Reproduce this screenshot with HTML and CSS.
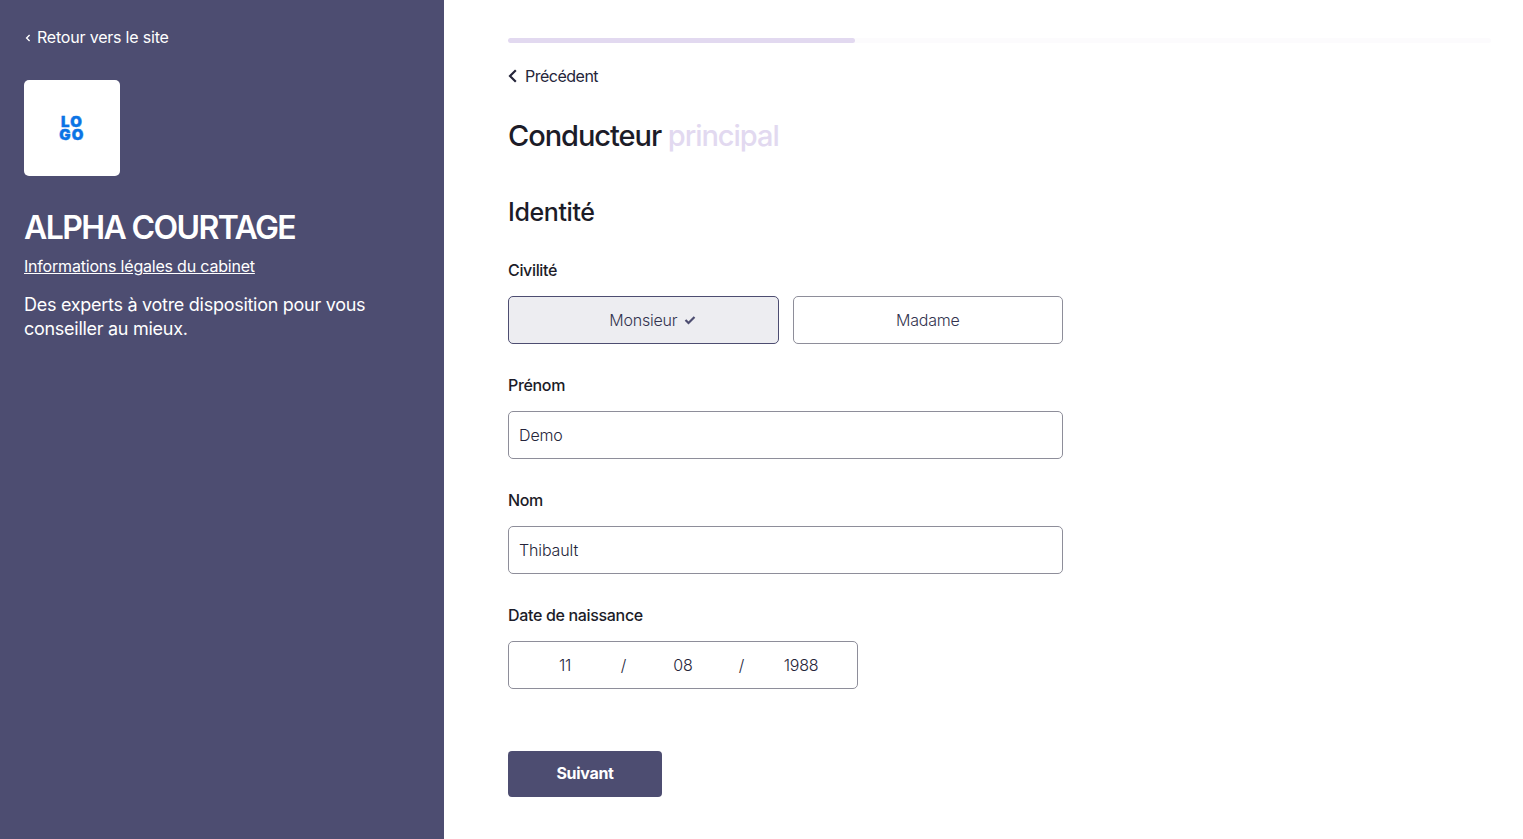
FILE: index.html
```html
<!DOCTYPE html>
<html lang="fr">
<head>
<meta charset="utf-8">
<title>Conducteur principal</title>
<link rel="stylesheet" href="styles.css">
</head>
<body>
<div class="layout">
  <aside class="side">
    <a class="back-site" href="#">
      <svg viewBox="0 0 6 8" width="6" height="8"><path d="M4.6 1 1.6 4l3 3" fill="none" stroke="#fff" stroke-width="1.4"/></svg>
      Retour vers le site
    </a>
    <div class="logo-box">
      <svg class="logo" viewBox="0 0 24 24" width="24" height="24">
        <text x="12" y="11.4" text-anchor="middle">LO</text>
        <text x="12" y="23.6" text-anchor="middle">GO</text>
      </svg>
    </div>
    <h1 class="brand">ALPHA COURTAGE</h1>
    <a class="legal" href="#">Informations légales du cabinet</a>
    <p class="pitch">Des experts à votre disposition pour vous conseiller au mieux.</p>
  </aside>
  <main class="main">
    <div class="progress"><div class="progress-fill"></div></div>
    <a class="prev" href="#">
      <svg viewBox="0 0 9 14" width="9" height="14"><path d="M7.800 1.200 2 7l5.800 5.800" fill="none" stroke="#25253a" stroke-width="2.200"/></svg>
      Précédent
    </a>
    <h2 class="title">Conducteur <span class="accent">principal</span></h2>
    <h3 class="section">Identité</h3>
    <div class="field">
      <div class="label">Civilité</div>
      <div class="choices">
        <button class="choice selected">Monsieur
          <svg class="check" viewBox="0 0 12 10" width="12" height="10"><path d="M1.500 5 4.500 8l6-6" fill="none" stroke="#4d4d71" stroke-width="2.200"/></svg>
        </button>
        <button class="choice">Madame</button>
      </div>
    </div>
    <div class="field">
      <div class="label">Prénom</div>
      <div class="input">Demo</div>
    </div>
    <div class="field">
      <div class="label">Nom</div>
      <div class="input">Thibault</div>
    </div>
    <div class="field">
      <div class="label">Date de naissance</div>
      <div class="date">
        <span class="part">11</span><span class="sep">/</span><span class="part">08</span><span class="sep">/</span><span class="part">1988</span>
      </div>
    </div>
    <button class="next">Suivant</button>
  </main>
</div>
</body>
</html>
```
FILE: styles.css
```css
* { box-sizing: border-box; }
html, body { margin: 0; height: 100%; }
body { font-family: Inter, "Liberation Sans", sans-serif; color: #25253a; background: #fff; overflow: hidden; }
a { color: inherit; }
.layout { display: flex; height: 839px; }
.side { width: 444px; flex: none; background: #4d4d71; color: #fff; padding: 28px 24px 0; display: flex; flex-direction: column; align-items: flex-start; }
.back-site { display: flex; align-items: center; gap: 6px; padding-left: 1px; font-size: 16px; line-height: 19px; letter-spacing: -0.2px; text-decoration: none; }
.logo-box { width: 96px; height: 96px; margin-top: 33px; background: #fff; border-radius: 5px; display: flex; align-items: center; justify-content: center; }
.logo { overflow: visible; }
.logo text { font-size: 15px; font-weight: 900; letter-spacing: 1.2px; fill: #0b74e5; stroke: #0b74e5; stroke-width: 0.4px; }
.brand { margin: 33px 0 0; font-size: 32px; line-height: 38px; font-weight: 600; letter-spacing: -1.6px; }
.legal { margin-top: 9px; font-size: 16px; line-height: 20px; letter-spacing: -0.2px; }
.pitch { margin: 17px 0 0; font-size: 18px; line-height: 24px; letter-spacing: -0.28px; width: 370px; }
.main { flex: 1; padding: 38px 32px 0 64px; }
.progress { height: 5px; width: 983px; background: #fcfbfd; border-radius: 3px; }
.progress-fill { width: 347px; height: 5px; background: #e2d9f0; border-radius: 3px; }
.prev { display: flex; align-items: center; gap: 8px; margin-top: 23px; height: 20px; font-size: 16px; font-weight: 400; letter-spacing: -0.5px; text-decoration: none; }
.title { margin: 32px 0 0; font-size: 29px; line-height: 36px; font-weight: 500; letter-spacing: -1.05px; color: #1c1c28; }
.accent { color: #e2d9f0; }
.section { margin: 43px 0 0; font-size: 25px; line-height: 30px; font-weight: 500; letter-spacing: -0.4px; color: #1c1c28; }
.field { margin-top: 31px; }
.section + .field { margin-top: 33px; }
.label { font-size: 16px; line-height: 20px; font-weight: 500; letter-spacing: -0.33px; color: #1c1c28; margin-bottom: 16px; }
.choices { display: flex; gap: 14px; width: 555px; }
.choice { flex: 1; height: 48px; background: #fff; border: 1px solid #8e8e9a; border-radius: 5px; font: inherit; font-size: 16px; font-weight: 300; letter-spacing: -0.2px; color: #33334f; display: flex; align-items: center; justify-content: center; gap: 7px; padding: 0; }
.choice.selected { background: #ededf1; border-color: #4d4d71; }
.check { margin-right: -19px; }
.input { width: 555px; height: 48px; border: 1px solid #8e8e9a; border-radius: 5px; font-size: 16px; font-weight: 300; letter-spacing: -0.13px; padding: 0 10px; display: flex; align-items: center; color: #25253a; }
.date { width: 350px; height: 48px; border: 1px solid #8e8e9a; border-radius: 5px; display: flex; align-items: center; font-size: 16px; font-weight: 300; letter-spacing: -0.2px; color: #25253a; padding-left: 26px; }
.part { width: 60px; text-align: center; }
.sep { width: 58px; padding-right: 1px; text-align: center; }
.next { display: block; margin-top: 62px; width: 154px; height: 46px; padding: 0 0 2px; background: #4d4d71; color: #fff; border: 0; border-radius: 4px; font: inherit; font-size: 16px; font-weight: 700; letter-spacing: -0.3px; }
```
